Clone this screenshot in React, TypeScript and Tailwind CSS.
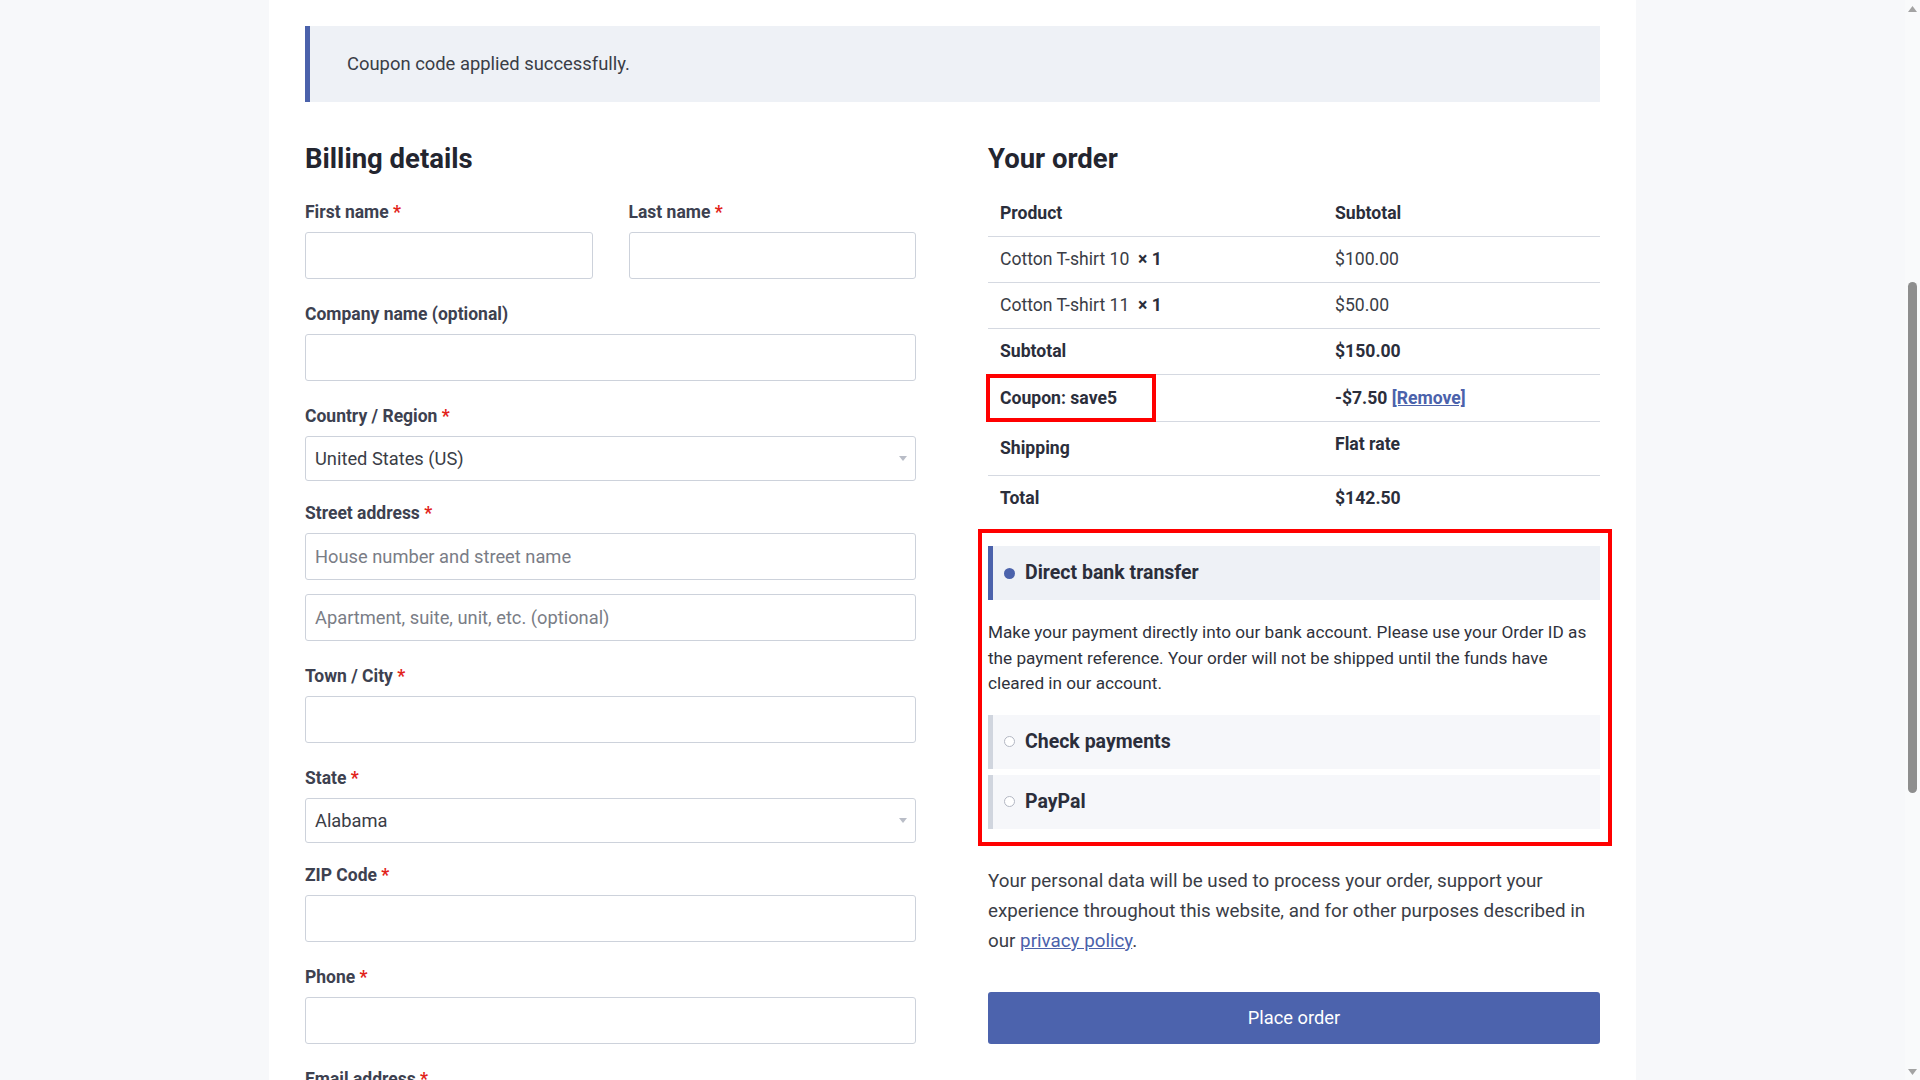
import React from "react";

const font = { fontFamily: "Roboto, 'Liberation Sans', sans-serif" };

function Label({ text, required = true }: { text: string; required?: boolean }) {
  return (
    <div className="text-[17.5px] leading-[26px] font-bold text-[#3d4150]">
      {text}
      {required && <span className="text-[#e2231a]"> *</span>}
    </div>
  );
}

function Input({ placeholder }: { placeholder?: string }) {
  return (
    <div className="h-[47px] border border-[#cdd2db] rounded-[3px] bg-white flex items-center px-[9px] text-[18.3px] text-[#7a7d86]">
      {placeholder}
    </div>
  );
}

function Select({ value }: { value: string }) {
  return (
    <div className="h-[45px] border border-[#cdd2db] rounded-[3px] bg-white flex items-center justify-between pl-[9px] pr-[8px] text-[18.3px] text-[#3a3d46]">
      <span>{value}</span>
      <svg width="8" height="6" viewBox="0 0 8 6">
        <path d="M0 0 L8 0 L4 5 Z" fill="#b9bdc7" />
      </svg>
    </div>
  );
}

function Field({ label, required = true, children }: { label: string; required?: boolean; children: React.ReactNode }) {
  return (
    <div className="flex flex-col gap-[7px] mb-[22px]">
      <Label text={label} required={required} />
      {children}
    </div>
  );
}

function SelectField({ label, value }: { label: string; value: string }) {
  return (
    <div className="flex flex-col gap-[7px] mb-[19px]">
      <Label text={label} />
      <Select value={value} />
    </div>
  );
}

function Scrollbar() {
  return (
    <div className="w-[15px] h-full bg-[#f9fafb] flex flex-col items-center">
      <div className="h-[17px] flex items-center justify-center">
        <svg width="9" height="6" viewBox="0 0 9 6">
          <path d="M4.5 0 L9 6 L0 6 Z" fill="#a3a3a3" />
        </svg>
      </div>
      <div className="h-[265px]" />
      <div className="w-[9px] h-[511px] rounded-full bg-[#8e8e8e]" />
      <div className="flex-1" />
      <div className="h-[17px] flex items-center justify-center">
        <svg width="9" height="6" viewBox="0 0 9 6">
          <path d="M0 0 L9 0 L4.5 6 Z" fill="#a3a3a3" />
        </svg>
      </div>
    </div>
  );
}

function Row({ left, right, bold = false }: { left: React.ReactNode; right: React.ReactNode; bold?: boolean }) {
  const cls = bold ? "font-bold text-[#2b2e3b]" : "text-[#3a3d46]";
  return (
    <tr className="border-b border-[#d5d9e1]">
      <td className={`w-[335px] px-[12px] py-[11px] leading-[23px] align-middle ${cls}`}>{left}</td>
      <td className={`px-[12px] py-[11px] leading-[23px] align-middle ${cls}`}>{right}</td>
    </tr>
  );
}

function PaymentMethod({ title, active }: { title: string; active?: boolean }) {
  return (
    <div
      className={`h-[54px] flex items-center gap-[10px] pl-[11px] border-l-[5px] ${
        active ? "bg-[#eef1f6] border-[#4b62ab]" : "bg-[#f6f7fa] border-[#d0d5de]"
      }`}
    >
      {active ? (
        <span className="w-[11px] h-[11px] rounded-full bg-[#4b62ab]" />
      ) : (
        <span className="w-[11px] h-[11px] rounded-full border border-[#b3b7c3] bg-white" />
      )}
      <span className="text-[19.5px] font-bold text-[#2b2e3b]">{title}</span>
    </div>
  );
}

export default function App() {
  return (
    <div className="h-screen w-full flex overflow-hidden bg-[#f7f8fa]" style={font}>
      <div className="flex-1 flex justify-center overflow-hidden">
        <div className="w-[1367px] bg-white px-[36px] pt-[26px]">
          <div className="h-[76px] bg-[#eef1f6] border-l-[5px] border-[#4b62ab] flex items-center pl-[37px] text-[18.4px] text-[#3a3d46]">
            Coupon code applied successfully.
          </div>

          <div className="grid grid-cols-[611px_612px] gap-x-[72px] mt-[40px]">
            {/* Billing */}
            <div>
              <h3 className="text-[27.5px] leading-[34px] font-bold text-[#23252f]">Billing details</h3>
              <div className="mt-[23px]">
                <div className="grid grid-cols-2 gap-x-[36px]">
                  <Field label="First name">
                    <Input />
                  </Field>
                  <Field label="Last name">
                    <Input />
                  </Field>
                </div>
                <Field label="Company name (optional)" required={false}>
                  <Input />
                </Field>
                <SelectField label="Country / Region" value="United States (US)" />
                <div className="flex flex-col mb-[22px]">
                  <Label text="Street address" />
                  <div className="h-[7px]" />
                  <Input placeholder="House number and street name" />
                  <div className="h-[14px]" />
                  <Input placeholder="Apartment, suite, unit, etc. (optional)" />
                </div>
                <Field label="Town / City">
                  <Input />
                </Field>
                <SelectField label="State" value="Alabama" />
                <Field label="ZIP Code">
                  <Input />
                </Field>
                <Field label="Phone">
                  <Input />
                </Field>
                <Label text="Email address" />
              </div>
            </div>

            {/* Order */}
            <div>
              <h3 className="text-[27.5px] leading-[34px] font-bold text-[#23252f]">Your order</h3>
              <table className="w-full mt-[15px] text-[17.6px] border-collapse">
                <thead>
                  <tr className="border-b border-[#d5d9e1]">
                    <th className="w-[335px] text-left px-[12px] py-[11px] leading-[23px] font-bold text-[#2b2e3b]">Product</th>
                    <th className="text-left px-[12px] py-[11px] leading-[23px] font-bold text-[#2b2e3b]">Subtotal</th>
                  </tr>
                </thead>
                <tbody>
                  <Row
                    left={
                      <>
                        Cotton T-shirt 10&nbsp; <strong className="text-[#2b2e3b]">×&nbsp;1</strong>
                      </>
                    }
                    right="$100.00"
                  />
                  <Row
                    left={
                      <>
                        Cotton T-shirt 11&nbsp; <strong className="text-[#2b2e3b]">×&nbsp;1</strong>
                      </>
                    }
                    right="$50.00"
                  />
                  <Row left="Subtotal" right="$150.00" bold />
                  <tr className="border-b border-[#d5d9e1]">
                    <td className="relative w-[335px] px-[12px] py-[11px] leading-[24px] font-bold text-[#2b2e3b]">
                      Coupon: save5
                      <div className="absolute left-[-2px] top-[-1px] w-[170px] h-[48px] border-[4px] border-[#ff0000]" />
                    </td>
                    <td className="px-[12px] py-[11px] leading-[24px] font-bold text-[#2b2e3b]">
                      -$7.50{" "}
                      <a className="text-[#4b62ab] underline font-bold" href="#">
                        [Remove]
                      </a>
                    </td>
                  </tr>
                  <tr className="border-b border-[#d5d9e1]">
                    <td className="w-[335px] px-[12px] py-[15px] leading-[23px] align-middle font-bold text-[#2b2e3b]">
                      Shipping
                    </td>
                    <td className="px-[12px] pt-[11px] pb-[19px] leading-[23px] align-top font-bold text-[#2b2e3b]">Flat rate</td>
                  </tr>
                  <tr>
                    <td className="w-[335px] px-[12px] py-[11px] leading-[23px] font-bold text-[#2b2e3b]">Total</td>
                    <td className="px-[12px] py-[11px] leading-[23px] font-bold text-[#2b2e3b]">$142.50</td>
                  </tr>
                </tbody>
              </table>

              <div className="relative mt-[25px]">
                <div className="absolute left-[-10px] right-[-12px] top-[-17px] bottom-[-17px] border-[4px] border-[#ff0000]" />
                <PaymentMethod title="Direct bank transfer" active />
                <p className="mt-[20px] mb-[18px] text-[17.2px] leading-[25.6px] text-[#2f323c]">
                  Make your payment directly into our bank account. Please use your Order ID as
                  <br />
                  the payment reference. Your order will not be shipped until the funds have
                  <br />
                  cleared in our account.
                </p>
                <PaymentMethod title="Check payments" />
                <div className="h-[6px]" />
                <PaymentMethod title="PayPal" />
              </div>

              <p className="mt-[37px] text-[18.8px] leading-[30px] text-[#3a3d46]">
                Your personal data will be used to process your order, support your
                <br />
                experience throughout this website, and for other purposes described in
                <br />
                our{" "}
                <a href="#" className="text-[#4b62ab] underline">
                  privacy policy
                </a>
                .
              </p>

              <button className="mt-[36px] w-full h-[52px] rounded-[3px] bg-[#4c63ad] text-white text-[18.3px]">
                Place order
              </button>
            </div>
          </div>
        </div>
      </div>
      <Scrollbar />
    </div>
  );
}
